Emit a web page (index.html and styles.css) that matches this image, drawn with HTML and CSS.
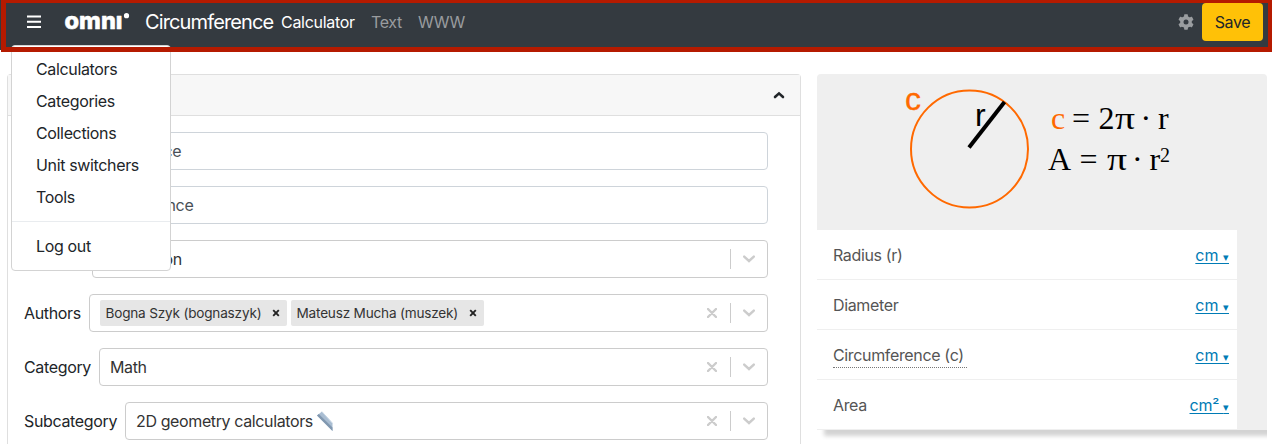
FILE: index.html
```html
<!DOCTYPE html>
<html lang="en">
<head>
<meta charset="utf-8">
<title>Circumference Calculator</title>
<link rel="stylesheet" href="styles.css">
</head>
<body>
<header class="navbar">
  <svg class="burger" width="14" height="14" viewBox="0 0 14 14"><path d="M0 1.5h14M0 6.8h14M0 12.1h14" stroke="#fff" stroke-width="2"/></svg>
  <svg class="logo" width="65" height="24" viewBox="0 0 65 24"><text class="logo-text" x="-0.5" y="18.5" textLength="58" lengthAdjust="spacingAndGlyphs">omnı</text><circle cx="61.5" cy="5.7" r="2.6" fill="#fff"/></svg>
  <h1 class="title">Circumference</h1>
  <nav class="tabs"><a class="tab active">Calculator</a><a class="tab text-tab">Text</a><a class="tab www-tab">WWW</a></nav>
  <svg class="gear" width="16" height="16" viewBox="0 0 16 16"><g fill="#9a9da0"><circle cx="8" cy="8" r="5.9"/><rect x="6.1" y="0.3" width="3.8" height="15.4" rx=".7"/><rect x="6.1" y="0.3" width="3.8" height="15.4" rx=".7" transform="rotate(60 8 8)"/><rect x="6.1" y="0.3" width="3.8" height="15.4" rx=".7" transform="rotate(120 8 8)"/></g><circle cx="8" cy="8" r="2.5" fill="#343a40"/></svg>
  <button class="save">Save</button>
  <div class="menu">
    <a class="item">Calculators</a><a class="item">Categories</a><a class="item">Collections</a><a class="item">Unit switchers</a><a class="item">Tools</a>
    <div class="divider"></div>
    <a class="item">Log out</a>
  </div>
  <div class="frame"></div>
</header>
<main class="page">
  <section class="card">
    <div class="card-head"><svg width="12" height="8" viewBox="0 0 12 8"><path d="M2 6L6 2.4 10 6" fill="none" stroke="#212529" stroke-width="2.6" stroke-linecap="round"/></svg></div>
    <div class="card-body">
      <div class="row"><div class="field input first">ce</div></div>
      <div class="row"><div class="field input second">nce</div></div>
      <div class="row"><div class="field third"><span class="value">on</span><i class="sep"></i><svg class="down" width="12" height="8" viewBox="0 0 12 8"><path d="M1.2 1.6L6 6l4.8-4.4"/></svg></div></div>
      <div class="row"><label class="l-authors">Authors</label><div class="field authors"><span class="tag tag-a"><span class="tag-text">Bogna Szyk (bognaszyk)</span><svg width="8" height="8" viewBox="0 0 8 8"><path d="M1.2 1.2l5.6 5.6M6.8 1.2L1.2 6.8"/></svg></span><span class="tag tag-b"><span class="tag-text">Mateusz Mucha (muszek)</span><svg width="8" height="8" viewBox="0 0 8 8"><path d="M1.2 1.2l5.6 5.6M6.8 1.2L1.2 6.8"/></svg></span><svg class="clear" width="10" height="10" viewBox="0 0 10 10"><path d="M1 1l8 8M9 1L1 9"/></svg><i class="sep"></i><svg class="down" width="12" height="8" viewBox="0 0 12 8"><path d="M1.2 1.6L6 6l4.8-4.4"/></svg></div></div>
      <div class="row"><label class="l-category">Category</label><div class="field"><span class="value">Math</span><svg class="clear" width="10" height="10" viewBox="0 0 10 10"><path d="M1 1l8 8M9 1L1 9"/></svg><i class="sep"></i><svg class="down" width="12" height="8" viewBox="0 0 12 8"><path d="M1.2 1.6L6 6l4.8-4.4"/></svg></div></div>
      <div class="row"><label class="l-sub">Subcategory</label><div class="field"><span class="value">2D geometry calculators</span><svg class="ruler" width="17" height="20" viewBox="0 0 17 20"><path d="M0 4.5L5 0.5 15.5 12v8z" fill="#a9bdd2"/><path d="M0 4.5L15.5 20v-3.4L1.8 3z" fill="#8198b0"/><path d="M5 .8L15.5 12.4" stroke="#c9d8e6"/></svg><svg class="clear" width="10" height="10" viewBox="0 0 10 10"><path d="M1 1l8 8M9 1L1 9"/></svg><i class="sep"></i><svg class="down" width="12" height="8" viewBox="0 0 12 8"><path d="M1.2 1.6L6 6l4.8-4.4"/></svg></div></div>
    </div>
  </section>
  <aside class="preview">
    <svg class="figure" width="450" height="156" viewBox="0 0 450 156">
      <circle cx="152.5" cy="75" r="58.5" fill="none" stroke="#ff6900" stroke-width="2"/>
      <path d="M152 73.5L187.5 28" stroke="#000" stroke-width="4"/>
      <text class="sans c big-c" x="88" y="36">c</text><text class="sans r" x="158" y="52">r</text>
      <text class="serif" y="55"><tspan class="c" x="234">c</tspan><tspan x="255">=</tspan><tspan x="281.5">2</tspan></text>
      <text class="serif" x="298" y="55" textLength="20" lengthAdjust="spacingAndGlyphs">π</text>
      <text class="serif" y="55"><tspan x="323.5">·</tspan><tspan x="341">r</tspan></text>
      <text class="serif" y="96"><tspan x="231">A</tspan><tspan x="262.5">=</tspan></text>
      <text class="serif" x="290" y="96" textLength="20" lengthAdjust="spacingAndGlyphs">π</text>
      <text class="serif" y="96"><tspan x="315">·</tspan><tspan x="332.5">r</tspan><tspan class="sup" x="343" y="88">2</tspan></text>
    </svg>
    <div class="vars">
      <div class="var"><span>Radius (r)</span><a class="unit">cm <small>▾</small></a></div>
      <div class="var"><span>Diameter</span><a class="unit">cm <small>▾</small></a></div>
      <div class="var"><span class="hint">Circumference (c)</span><a class="unit">cm <small>▾</small></a></div>
      <div class="var"><span>Area</span><a class="unit area-unit">cm² <small>▾</small></a></div>
    </div>
  </aside>
</main>
</body>
</html>
```
FILE: styles.css
```css
* { box-sizing: border-box; }
body { margin: 0; height: 444px; overflow: hidden; background: #fff; color: #212529; font: 16px/24px Inter, "Liberation Sans", sans-serif; letter-spacing: -0.35px; }
svg { flex: none; }
.navbar { position: relative; z-index: 2; display: flex; align-items: center; height: 50px; padding: 0 9px 6px 27px; background: #343a40; color: #fff; }
.logo { margin-left: 24px; overflow: visible; }
.logo-text { font: 800 22.5px Inter, sans-serif; letter-spacing: 0; fill: #fff; stroke: #fff; stroke-width: .5; stroke-linejoin: round; }
.title { width: 136px; margin: 0 0 0 15px; font-size: 20px; font-weight: 400; line-height: 30px; letter-spacing: -0.87px; white-space: nowrap; }
.tabs { display: flex; flex: 1; }
.tab { color: #999c9f; white-space: nowrap; }
.active { width: 90px; color: #fff; letter-spacing: -0.3px; }
.text-tab { width: 47px; }
.gear { margin-right: 8px; }
.save { width: 61px; height: 38px; border: 0; border-radius: 4px; padding: 0; background: #ffc107; color: #212529; font: inherit; letter-spacing: -0.35px; }
.menu { position: absolute; left: 11px; top: 45px; width: 160px; padding: 7px 0 8px; border: 1px solid #d3d3d3; border-radius: 4px; background: #fff; color: #212529; }
.item { display: block; padding: 4px 24px; white-space: nowrap; }
.divider { height: 1px; margin: 8px 0; background: #e9ecef; }
.frame { position: absolute; left: 1px; top: -2px; width: 1271px; height: 54px; border: 5px solid #b51a00; border-right-width: 4px; }
.page { display: flex; gap: 16px; padding: 24px 5px 0 7px; }
.card { flex: none; width: 794px; height: 370px; border: 1px solid #dfdfdf; border-bottom: 0; border-radius: 4px 4px 0 0; }
.card-head { display: flex; justify-content: flex-end; align-items: center; height: 41px; padding-right: 15px; border-bottom: 1px solid #dfdfdf; background: #f7f7f7; }
.card-body { display: flex; flex-direction: column; gap: 16px; padding: 16px 32px 0 16px; }
.row { display: flex; align-items: center; height: 38px; }
.row label { flex: none; white-space: nowrap; }
.l-authors { width: 65px; }
.l-category { width: 75px; }
.l-sub { width: 101px; }
.field { display: flex; flex: 1; align-items: center; height: 38px; padding: 0 12px 0 10px; border: 1px solid #ccc; border-radius: 4px; color: #333; white-space: nowrap; }
.input { border-color: #ced4da; color: #495057; }
.first { padding-left: 138.5px; }
.second { padding-left: 141.5px; }
.third { margin-left: 68px; padding-left: 70.5px; }
.value { letter-spacing: -0.38px; }
.sep { width: 1px; height: 20px; margin: 0 12px 0 auto; background: #ccc; }
.clear { margin-left: auto; }
.clear + .sep { margin-left: 13px; }
.down path, .clear path { fill: none; stroke: #ccc; stroke-width: 2.4; stroke-linecap: round; }
.tag { display: flex; align-items: center; height: 26px; margin-right: 4px; padding: 0 7px 0 5.5px; border-radius: 2px; background: #e6e6e6; font-size: 13.6px; letter-spacing: -0.2px; }
.tag-a { width: 187px; }
.tag-b { width: 193px; }
.tag svg { margin-left: auto; }
.tag path { stroke: #222; stroke-width: 1.9; }
.ruler { margin-left: 4px; }
.preview { width: 450px; height: 356px; border-radius: 4px 4px 0 0; background: #efefef; box-shadow: 7px 6px 4px #d3d3d3; clip-path: inset(0 0 -14px 0); }
.figure { display: block; }
.c { fill: #ff6900; }
.sans { font: 30px "Liberation Sans", sans-serif; letter-spacing: 0; }
.big-c { font-size: 32px; stroke: #ff6900; stroke-width: .3; }
.r { font-size: 32px; }
.serif { font: 32px "Liberation Serif", serif; letter-spacing: 0; }
.sup { font-size: 20px; }
.vars { width: 420px; }
.var { display: flex; align-items: center; justify-content: space-between; height: 50px; padding: 0 8px 0 16px; border-bottom: 1px solid #efefef; background: #fff; color: #555; }
.hint { width: 134px; height: 25px; margin-top: 1px; line-height: 25px; border-bottom: 1px dotted #777; }
.unit { display: block; height: 24px; line-height: 24px; color: #007bb5; text-decoration: underline; text-underline-offset: 2px; letter-spacing: 0; }
.area-unit { letter-spacing: -0.25px; }
.unit small { font-size: 10.5px; line-height: 1; }
```
